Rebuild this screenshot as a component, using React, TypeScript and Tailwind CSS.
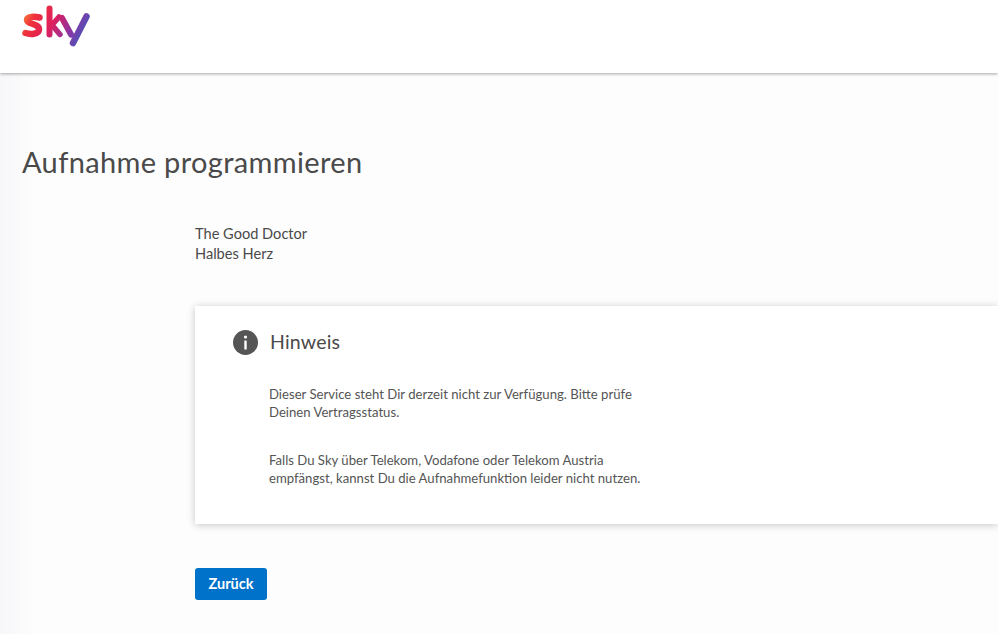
function SkyLogo() {
  return (
    <svg width="70" height="42" viewBox="0 0 70 42" fill="none" className="block">
      <defs>
        <linearGradient id="skyGrad" x1="0" y1="2" x2="68" y2="38" gradientUnits="userSpaceOnUse">
          <stop offset="0" stopColor="#f8a040" />
          <stop offset="0.2" stopColor="#f0303a" />
          <stop offset="0.45" stopColor="#dc1f5e" />
          <stop offset="0.7" stopColor="#8a36a4" />
          <stop offset="1" stopColor="#2368c4" />
        </linearGradient>
      </defs>
      <path
        d="M17.5 12.5 C13 11.5 5 11 5 15 C5 19.5 17 18 17 24.5 C17 29.5 8 29.5 3.5 28"
        stroke="url(#skyGrad)"
        strokeWidth="6.5"
        strokeLinecap="round"
      />
      <path d="M27.5 3.5 V29.5" stroke="url(#skyGrad)" strokeWidth="6" strokeLinecap="round" />
      <path d="M37 12 L30 20 L38 29.5" stroke="url(#skyGrad)" strokeWidth="5.5" strokeLinecap="round" strokeLinejoin="round" />
      <path d="M40 13 L49 29.5" stroke="url(#skyGrad)" strokeWidth="6" strokeLinecap="round" />
      <path d="M64.5 11.5 L51 38" stroke="url(#skyGrad)" strokeWidth="6.5" strokeLinecap="round" />
    </svg>
  );
}

function InfoIcon() {
  return (
    <svg width="25" height="25" viewBox="0 0 25 25" className="block shrink-0">
      <circle cx="12.5" cy="12.5" r="12.5" fill="#555555" />
      <rect x="11.3" y="10.5" width="2.4" height="9" rx="0.5" fill="#ffffff" />
      <circle cx="12.5" cy="7" r="1.6" fill="#ffffff" />
    </svg>
  );
}

export default function App() {
  return (
    <div className="h-[634px] w-[998px] overflow-hidden bg-white font-['Lato','Liberation_Sans',sans-serif] text-[#4a4a4a]">
      <header className="relative z-10 h-[73px] bg-white pl-[22px] pt-[5px] shadow-[0_1px_3px_rgba(0,0,0,0.35)]">
        <SkyLogo />
      </header>
      <main className="h-[561px] bg-gradient-to-r from-[#f7f7fa] via-[#fdfdfd] via-[3.5%] to-[#fdfdfd] pt-[71px]">
        <h1 className="ml-[22px] text-[29px] leading-[36px] font-normal tracking-[0.35px] text-[#4a4a4a]">
          Aufnahme programmieren
        </h1>
        <div className="ml-[195px] mt-[44px] text-[14.6px] leading-[20px] text-[#4a4a4a]">
          <p>The Good Doctor</p>
          <p>Halbes Herz</p>
        </div>
        <section className="ml-[195px] mt-[42px] h-[218px] bg-white pl-[38px] pt-[23px] shadow-[0_1px_8px_rgba(0,0,0,0.22)]">
          <div className="flex items-center gap-[12px]">
            <InfoIcon />
            <h2 className="text-[19.5px] leading-[26px] font-normal tracking-[0.2px]">Hinweis</h2>
          </div>
          <div className="ml-[36px] mt-[30px] w-[420px] text-[13.15px] leading-[18px] text-[#555555]">
            <p>
              Dieser Service steht Dir derzeit nicht zur Verfügung. Bitte prüfe
              <br />
              Deinen Vertragsstatus.
            </p>
            <p className="mt-[30px]">
              Falls Du Sky über Telekom, Vodafone oder Telekom Austria
              <br />
              empfängst, kannst Du die Aufnahmefunktion leider nicht nutzen.
            </p>
          </div>
        </section>
        <button className="ml-[195px] mt-[44px] flex h-[32px] w-[72px] items-center justify-center rounded-[3px] bg-[#0072c9] text-[14.5px] font-bold text-white">
          Zurück
        </button>
      </main>
    </div>
  );
}
